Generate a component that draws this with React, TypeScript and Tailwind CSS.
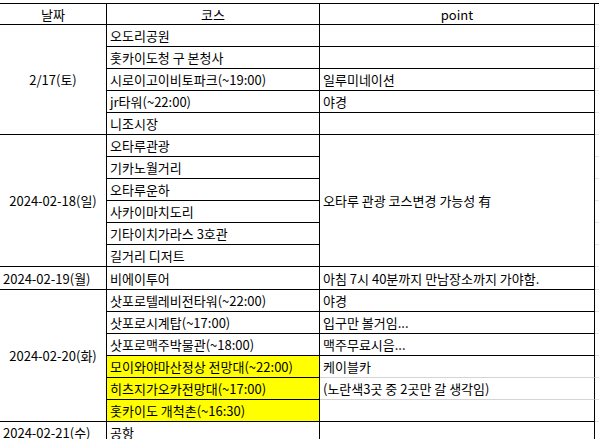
import { Fragment } from 'react';

type Cell = {
	text?: string;
	span?: number;
	center?: boolean;
	yellow?: boolean;
	light?: boolean;
};

type Row = Cell[];

// 한 줄씩: [날짜?, 코스, point]  (날짜가 병합된 줄은 날짜 생략)
const rows: Row[] = [
	[{ text: '2/17(토)', span: 5, center: true }, { text: '오도리공원' }, {}],
	[{ text: '홋카이도청 구 본청사' }, {}],
	[{ text: '시로이고이비토파크(~19:00)' }, { text: '일루미네이션' }],
	[{ text: 'jr타워(~22:00)' }, { text: '야경' }],
	[{ text: '니조시장' }, {}],
	[
		{ text: '2024-02-18(일)', span: 6, center: true },
		{ text: '오타루관광' },
		{ text: '오타루 관광 코스변경 가능성 有', span: 6 },
	],
	[{ text: '기카노월거리' }],
	[{ text: '오타루운하' }],
	[{ text: '사카이마치도리' }],
	[{ text: '기타이치가라스 3호관' }],
	[{ text: '길거리 디저트' }],
	[
		{ text: '2024-02-19(월)' },
		{ text: '비에이투어' },
		{ text: '아침 7시 40분까지 만남장소까지 가야함.' },
	],
	[
		{ text: '2024-02-20(화)', span: 6, center: true },
		{ text: '삿포로텔레비전타워(~22:00)' },
		{ text: '야경' },
	],
	[{ text: '삿포로시계탑(~17:00)' }, { text: '입구만 볼거임...' }],
	[{ text: '삿포로맥주박물관(~18:00)' }, { text: '맥주무료시음...' }],
	[{ text: '모이와야마산정상 전망대(~22:00)', yellow: true }, { text: '케이블카', light: true }],
	[{ text: '히츠지가오카전망대(~17:00)', yellow: true }, { text: '(노란색3곳 중 2곳만 갈 생각임)', light: true }],
	[{ text: '홋카이도 개척촌(~16:30)', yellow: true }, {}],
	[{ text: '2024-02-21(수)' }, { text: '공항' }, {}],
];

const spanClass: Record<number, string> = {
	1: '',
	5: 'row-span-5',
	6: 'row-span-6',
};

function GridCell({ cell }: { cell: Cell }) {
	return (
		<div
			className={[
				'flex items-center border-r border-b border-r-black whitespace-nowrap overflow-hidden px-[3px]',
				cell.light ? 'border-b-[#d4d4d4]' : 'border-b-black',
				cell.center ? 'justify-center' : '',
				cell.yellow ? 'bg-[#ffff00]' : 'bg-white',
				spanClass[cell.span ?? 1],
			].join(' ')}
		>
			{cell.text}
		</div>
	);
}

function Filler() {
	return <div className="border-b border-b-[#e2e2e2] bg-white" />;
}

export default function App() {
	return (
		<div className="w-[599px] h-[439px] overflow-hidden bg-white pt-[3px] font-['Noto_Sans_CJK_KR','Noto_Sans',sans-serif] text-[13px] leading-none text-black">
			<div className="grid grid-cols-[107px_213px_275px_1fr] grid-rows-[21px_repeat(11,22px)_23px_repeat(7,22px)] border-t border-black">
				<GridCell cell={{ text: '날짜', center: true }} />
				<GridCell cell={{ text: '코스', center: true }} />
				<GridCell cell={{ text: 'point', center: true }} />
				<Filler />
				{rows.map((row, i) => (
					<Fragment key={i}>
						{row.map((cell, j) => (
							<GridCell key={j} cell={cell} />
						))}
						<Filler />
					</Fragment>
				))}
			</div>
		</div>
	);
}
